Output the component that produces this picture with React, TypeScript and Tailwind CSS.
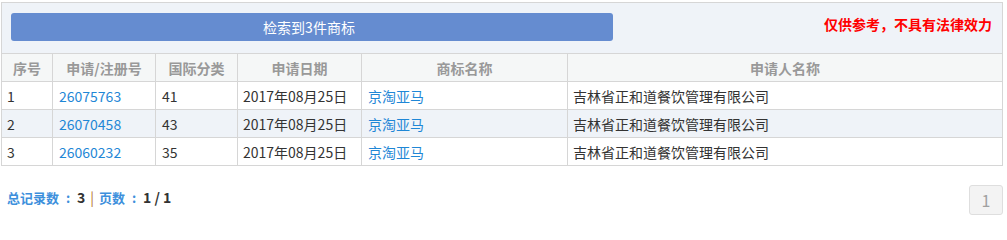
const rows = [
  { no: "1", reg: "26075763", cls: "41", date: "2017年08月25日", name: "京淘亚马", applicant: "吉林省正和道餐饮管理有限公司" },
  { no: "2", reg: "26070458", cls: "43", date: "2017年08月25日", name: "京淘亚马", applicant: "吉林省正和道餐饮管理有限公司" },
  { no: "3", reg: "26060232", cls: "35", date: "2017年08月25日", name: "京淘亚马", applicant: "吉林省正和道餐饮管理有限公司" },
];

const headers = ["序号", "申请/注册号", "国际分类", "申请日期", "商标名称", "申请人名称"];

export default function App() {
  return (
    <div
      className="pt-[2px] pl-[1px] w-[1003px] text-[14px] text-[#333]"
      style={{ fontFamily: '"Noto Sans CJK SC", "Noto Sans", sans-serif' }}
    >
      {/* ─── Search summary ─── */}
      <div className="h-[51px] border-t border-x border-[#d6d6d6] bg-[#eff3f8] flex items-start justify-between pl-[9px] pr-[10px] pt-[10px]">
        <div className="w-[602px] h-[28px] rounded-[3px] bg-[#658cd0] text-white flex items-center justify-center leading-none pr-[6px]">
          检索到3件商标
        </div>
        <p className="mt-[4px] text-[#f00] font-bold leading-none">仅供参考，不具有法律效力</p>
      </div>

      {/* ─── Results ─── */}
      <table className="w-[1002px] table-fixed border-collapse border border-[#d6d6d6]">
        <colgroup>
          <col className="w-[51px]" />
          <col className="w-[103px]" />
          <col className="w-[82px]" />
          <col className="w-[124px]" />
          <col className="w-[206px]" />
          <col />
        </colgroup>
        <thead>
          <tr className="bg-[#f5f7f7]">
            {headers.map((h) => (
              <th
                key={h}
                className="h-[28px] border border-[#d6d6d6] p-0 text-center font-bold text-[#999] leading-none"
              >
                {h}
              </th>
            ))}
          </tr>
        </thead>
        <tbody>
          {rows.map((r, i) => (
            <tr key={r.reg} className={i === 1 ? "bg-[#eff3f8]" : "bg-white"}>
              <td className="h-[28px] border border-[#d6d6d6] px-[5px] py-0 leading-none">{r.no}</td>
              <td className="border border-[#d6d6d6] px-[6px] py-0 leading-none text-[#1f87d6]">{r.reg}</td>
              <td className="border border-[#d6d6d6] px-[6px] py-0 leading-none">{r.cls}</td>
              <td className="border border-[#d6d6d6] px-[5px] py-0 leading-none">{r.date}</td>
              <td className="border border-[#d6d6d6] px-[6px] py-0 leading-none text-[#1f87d6]">{r.name}</td>
              <td className="border border-[#d6d6d6] px-[5px] py-0 leading-none">{r.applicant}</td>
            </tr>
          ))}
        </tbody>
      </table>

      {/* ─── Footer ─── */}
      <div className="mt-[19px] flex items-start justify-between">
        <p className="mt-[5px] pl-[6px] flex items-center text-[13px] font-bold leading-none">
          <span className="text-[#3d8fdc]">总记录数</span>
          <span className="w-[18px] text-center text-[#3d8fdc]">:</span>
          <span className="text-[14px] text-[#333]">3</span>
          <span className="mx-[5px] text-[14px] text-[#b5702f] font-normal">|</span>
          <span className="text-[#3d8fdc]">页数</span>
          <span className="w-[18px] text-center text-[#3d8fdc]">:</span>
          <span className="text-[14px] text-[#333] whitespace-pre">1 / 1</span>
        </p>
        <div className="w-[34px] h-[30px] rounded-[3px] border border-[#dedede] bg-[#f3f3f3] text-[#a0a0a0] flex items-center justify-center text-[16px]">
          1
        </div>
      </div>
    </div>
  );
}
